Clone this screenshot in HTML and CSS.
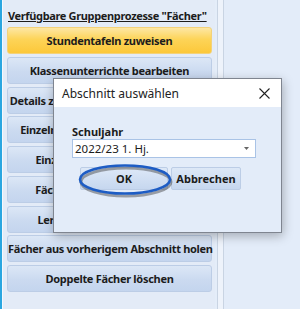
FILE: index.html
```html
<!DOCTYPE html>
<html lang="de">
<head>
    <meta charset="UTF-8">
    <title>Gruppenprozesse Fächer</title>
    <link rel="stylesheet" href="styles.css">
</head>
<body>
    <div class="screen">
        <div class="edge-strip"></div>
        <div class="process-panel">
            <div class="panel-title">Verfügbare Gruppenprozesse "Fächer"</div>
            <div class="button-list">
                <button class="process-button active">Stundentafeln zuweisen</button>
                <button class="process-button">Klassenunterrichte bearbeiten</button>
                <button class="process-button">Details zu Klassenunterrichten ändern</button>
                <button class="process-button">Einzelne Unterrichte zurücksetzen</button>
                <button class="process-button">Einzelfächer Kurse zuordnen</button>
                <button class="process-button">Fächer nach Kürzel sortieren</button>
                <button class="process-button">Lernbereiche Fächer prüfen</button>
                <button class="process-button">Fächer aus vorherigem Abschnitt holen</button>
                <button class="process-button">Doppelte Fächer löschen</button>
            </div>
        </div>
        <div class="splitter"></div>
        <div class="right-area"></div>

        <div class="dialog">
            <div class="dialog-titlebar">
                <span>Abschnitt auswählen</span>
                <svg class="close-icon" width="11" height="11" viewBox="0 0 11 11">
                    <path d="M0.5 0.5 L10.5 10.5 M10.5 0.5 L0.5 10.5" stroke="#222" stroke-width="1.1" fill="none"/>
                </svg>
            </div>
            <div class="dialog-body">
                <label class="field-label">Schuljahr</label>
                <div class="combo">
                    <span>2022/23 1. Hj.</span>
                    <svg width="5" height="3" viewBox="0 0 5 3"><path d="M0 0 L5 0 L2.5 3 Z" fill="#666"/></svg>
                </div>
                <div class="dialog-buttons">
                    <button class="dialog-button ok-button">OK</button>
                    <button class="dialog-button">Abbrechen</button>
                </div>
            </div>
            <!-- Markierung um OK -->
            <svg class="ok-mark" width="100" height="38" viewBox="0 0 100 38">
                <ellipse cx="50" cy="20" rx="45" ry="14" fill="none" stroke="rgba(60,60,60,0.45)" stroke-width="3"/>
                <ellipse cx="49" cy="17.5" rx="45" ry="14" fill="none" stroke="#1d5cc4" stroke-width="2.6"/>
            </svg>
        </div>
    </div>
</body>
</html>
```

FILE: styles.css
```css
body {
    margin: 0;
    padding: 0;
    font-family: "Noto Sans", "Open Sans", sans-serif;
    background-color: #e4edf9;
}
.screen {
    position: relative;
    display: flex;
    width: 300px;
    height: 309px;
    overflow: hidden;
}
.edge-strip {
    width: 2px;
    background-color: #2aa6e0;
    border-right: 1px solid #f4f8fd;
}
.process-panel {
    width: 212px;
    background-color: #e3ebf7;
    padding: 0 0 0 4px;
    box-sizing: border-box;
}
.panel-title {
    font-size: 11px;
    font-weight: bold;
    color: #1c1c1c;
    text-decoration: underline;
    padding: 8px 0 0 1px;
    height: 19px;
    letter-spacing: -0.35px;
    white-space: nowrap;
}
.button-list {
    display: flex;
    flex-direction: column;
    gap: 2.75px;
    width: 205px;
}
.process-button {
    height: 27px;
    border: 1px solid #bccde6;
    border-radius: 3px;
    background: linear-gradient(#dce7f6, #cbdaf0 55%, #c4d5ee);
    font-family: "Noto Sans", "Open Sans", sans-serif;
    font-size: 11px;
    font-weight: bold;
    color: #1c1c1c;
    white-space: nowrap;
    padding: 0;
    letter-spacing: -0.3px;
}
.process-button.active {
    border-color: #f3d27a;
    background: linear-gradient(#fde7a4, #fdd458 45%, #fcc83a);
}
.splitter {
    width: 5px;
    margin-left: 2px;
    background-color: #eef3fb;
    border-left: 1px solid #c9d4e3;
    border-right: 1px solid #c9d4e3;
}
.right-area {
    flex: 1;
    background-color: #e3ecf9;
}
.dialog {
    position: absolute;
    left: 53px;
    top: 78px;
    width: 229px;
    height: 155px;
    border: 1px solid #7f8590;
    box-sizing: border-box;
    background-color: #e3ecf9;
    box-shadow: 1px 3px 10px rgba(0, 0, 0, 0.28);
}
.dialog-titlebar {
    height: 28px;
    background-color: #ffffff;
    display: flex;
    align-items: center;
    justify-content: space-between;
    padding: 0 11px 0 8px;
    font-size: 12px;
    color: #222;
}
.dialog-body {
    padding: 17px 0 0 18px;
}
.field-label {
    display: block;
    font-size: 11px;
    font-weight: bold;
    color: #1c1c1c;
    height: 15px;
}
.combo {
    width: 184px;
    height: 19px;
    box-sizing: border-box;
    border: 1px solid #a9c3e6;
    background-color: #ffffff;
    display: flex;
    align-items: center;
    justify-content: space-between;
    padding: 0 6px 0 2px;
    font-size: 11.5px;
    color: #1c1c1c;
}
.dialog-buttons {
    display: flex;
    gap: 3px;
    margin: 9px 0 0 8px;
}
.dialog-button {
    height: 23px;
    border: 1px solid #bccde6;
    border-radius: 2px;
    background: linear-gradient(#dde8f7, #c6d7ef);
    font-family: "Noto Sans", "Open Sans", sans-serif;
    font-size: 11px;
    font-weight: bold;
    color: #1c1c1c;
    padding: 0;
}
.ok-button {
    width: 88px;
}
.dialog-button:last-child {
    width: 70px;
}
.ok-mark {
    position: absolute;
    left: 22px;
    top: 83px;
}
```
